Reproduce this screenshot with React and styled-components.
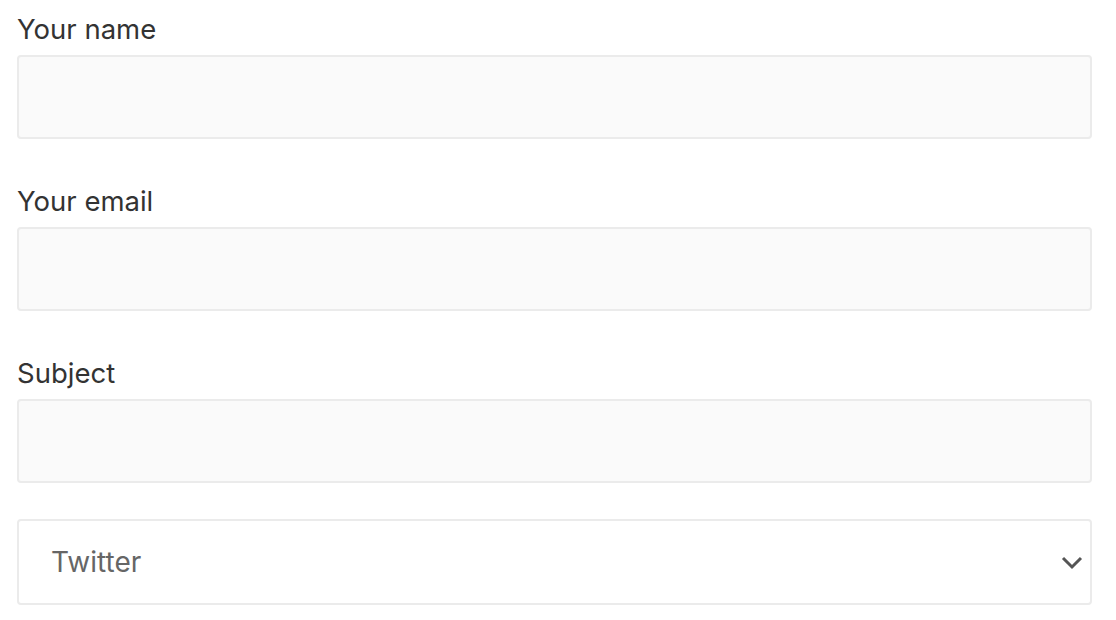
import React from 'react'
import styled, { createGlobalStyle } from 'styled-components'

const GlobalStyle = createGlobalStyle`
    body {
        margin: 0;
        background: #ffffff;
        font-family: Inter, "Liberation Sans", sans-serif;
    }
`

const Form = styled.form`
    display: flex;
    flex-direction: column;
    padding: 11px 25px 0 17px;
    width: 1075px;
`

const Group = styled.div`
    display: flex;
    flex-direction: column;
    margin-bottom: ${({last}) => last ? '36px' : '44px'};
`

const Label = styled.label`
    font-size: 27.5px;
    line-height: 36px;
    color: #333333;
    margin-bottom: 8px;
`

const Input = styled.input`
    box-sizing: border-box;
    height: 84px;
    width: 100%;
    background: #fafafa;
    border: 2px solid #ebebeb;
    border-radius: 4px;
    outline: none;
`

const SelectWrap = styled.div`
    position: relative;
`

const Select = styled.select`
    box-sizing: border-box;
    appearance: none;
    height: 86px;
    width: 100%;
    background: #ffffff;
    border: 2px solid #ebebeb;
    border-radius: 4px;
    padding: 0 32px;
    font-family: inherit;
    font-size: 28px;
    color: #666666;
    outline: none;
`

const Chevron = styled.svg`
    position: absolute;
    right: 9px;
    top: 37px;
    pointer-events: none;
`

const App = () => {
  return (
    <>
        <GlobalStyle/>
        <Form>
            <Group>
                <Label>Your name</Label>
                <Input type="text"/>
            </Group>
            <Group>
                <Label>Your email</Label>
                <Input type="email"/>
            </Group>
            <Group last>
                <Label>Subject</Label>
                <Input type="text"/>
            </Group>
            <SelectWrap>
                <Select defaultValue="twitter">
                    <option value="twitter">Twitter</option>
                </Select>
                <Chevron width="22" height="14" viewBox="0 0 22 14">
                    <path d="M2 2 L11 11 L20 2" fill="none" stroke="#555555" strokeWidth="3"/>
                </Chevron>
            </SelectWrap>
        </Form>
    </>
  )
}

export default App
